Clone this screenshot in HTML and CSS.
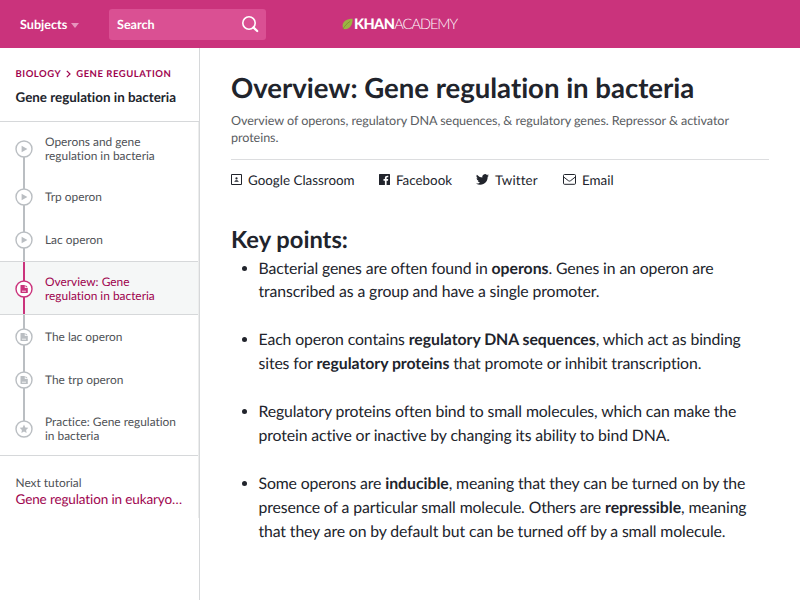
FILE: index.html
```html
<!DOCTYPE html>
<html lang="en">
<head>
<meta charset="UTF-8">
<meta name="viewport" content="width=device-width, initial-scale=1.0">
<title>Overview: Gene regulation in bacteria | Khan Academy</title>
<link rel="stylesheet" href="styles.css">
</head>

<body>

<!-- shared icon shapes -->
<svg class="sprite" aria-hidden="true">
<symbol id="video" viewBox="0 0 18 18">
<circle cx="9" cy="9" r="8" fill="#fff" stroke="currentColor" stroke-width="1.4"/>
<path d="M6.6 5.700v6.600L12.400 9z" fill="currentColor"/>
</symbol>
<symbol id="article" viewBox="0 0 18 18">
<circle cx="9" cy="9" r="8" fill="#fff" stroke="currentColor" stroke-width="1.4"/>
<path d="M5.6 5h4.2v3h3v4.400a.7.7 0 0 1-.7.7H6.200a.7.7 0 0 1-.7-.7V5.600zM10.500 5l2.200 2.300h-2.200z" fill="currentColor"/>
<path d="M7 11.200h4" stroke="#fff" stroke-width=".8"/>
</symbol>
<symbol id="exercise" viewBox="0 0 18 18">
<circle cx="9" cy="9" r="8" fill="#fff" stroke="currentColor" stroke-width="1.4"/>
<path d="M9 4.6l1.3 2.8 3 .4-2.2 2.1.5 3L9 11.5l-2.6 1.4.5-3-2.2-2.1 3-.4z" fill="currentColor"/>
</symbol>
</svg>

<header class="navbar">
<a class="subjects">Subjects <span class="caret"></span></a>
<div class="search">
<span>Search</span>
<svg width="18" height="18" viewBox="0 0 18 18" fill="none" stroke="#fff">
<circle cx="8" cy="8" r="6.2" stroke-width="1.6"/>
<path d="M12.4 12.4l3.8 3.6" stroke-width="2.2" stroke-linecap="round"/>
</svg>
</div>
<a class="logo">
<svg width="11" height="12" viewBox="0 0 11 12">
<path d="M10.6.8C5 .8.6 3.400.6 7.600c0 1.700.6 2.800 1.300 3.500C7.400 11.600 10.800 7.600 10.600.8z" fill="#9cb443"/>
<path d="M.8 11.300C2.600 8 5 5.300 8.300 3.200" stroke="#7a8b2f" stroke-width=".8" fill="none"/>
</svg>
<b>KHAN</b><span>ACADEMY</span>
</a>
</header>

<div class="page">

<aside class="sidebar">
<div class="sidebar-head">
<div class="breadcrumb">
<a>BIOLOGY</a>
<svg width="5" height="8" viewBox="0 0 5 8"><path d="M.8.800L4 4 .8 7.200" fill="none" stroke="currentColor" stroke-width="1.200"/></svg>
<a>GENE REGULATION</a>
</div>
<div class="tutorial-title">Gene regulation in bacteria</div>
</div>

<div class="tutorial">
<ul class="lessons">
<li class="tall"><svg class="node"><use href="#video"/></svg><span>Operons and gene<br>regulation in bacteria</span></li>
<li><svg class="node"><use href="#video"/></svg><span>Trp operon</span></li>
<li><svg class="node"><use href="#video"/></svg><span>Lac operon</span></li>
<li class="tall active"><svg class="node"><use href="#article"/></svg><span>Overview: Gene<br>regulation in bacteria</span></li>
<li><svg class="node"><use href="#article"/></svg><span>The lac operon</span></li>
<li><svg class="node"><use href="#article"/></svg><span>The trp operon</span></li>
<li class="tall"><svg class="node"><use href="#exercise"/></svg><span>Practice: Gene regulation<br>in bacteria</span></li>
</ul>

<div class="next">
<div class="next-label">Next tutorial</div>
<a class="next-link">Gene regulation in eukaryo…</a>
</div>
</div>
</aside>

<main class="content">
<h1>Overview: Gene regulation in bacteria</h1>
<p class="description">Overview of operons, regulatory DNA sequences, &amp; regulatory genes. Repressor &amp; activator<br>proteins.</p>

<div class="share">
<a class="classroom">
<svg width="11" height="11" viewBox="0 0 11 11"><path d="M.5.500h10v10H.5z" fill="none" stroke="currentColor"/><circle cx="5.500" cy="4.400" r="1.100" fill="currentColor"/><path d="M3.300 7.800c0-2.200 4.400-2.200 4.400 0z" fill="currentColor"/></svg>
Google Classroom</a>
<a class="facebook">
<svg width="11" height="11" viewBox="0 0 11 11"><path d="M.6 0h9.800q.6 0 .6.600v9.800q0 .6-.6.600H7.600V6.800H9l.2-1.700H7.600V4.100c0-.5.200-.8.800-.8h.9V1.800C7.100 1.500 5.900 2.200 5.900 3.800v1.300H4.500v1.700h1.400V11H.6q-.6 0-.6-.6V.6Q0 0 .6 0z" fill="currentColor"/></svg>
Facebook</a>
<a class="twitter">
<svg width="13" height="11" viewBox="0 0 24 20"><path d="M24 2.400a10 10 0 0 1-2.800.8A5 5 0 0 0 23.300.5a10 10 0 0 1-3.100 1.200 4.900 4.900 0 0 0-8.400 4.500A14 14 0 0 1 1.700 1a4.900 4.900 0 0 0 1.500 6.600A5 5 0 0 1 1 7v.1a4.900 4.900 0 0 0 4 4.800 5 5 0 0 1-2.300.1 4.900 4.900 0 0 0 4.600 3.400A10 10 0 0 1 0 17.500a14 14 0 0 0 21.500-12.400V4.900A10 10 0 0 0 24 2.400z" fill="currentColor"/></svg>
Twitter</a>
<a class="email">
<svg width="13" height="11" viewBox="0 0 13 11"><rect x=".5" y=".5" width="12" height="9.800" rx="1" fill="none" stroke="currentColor"/><path d="M.7 3l4.700 3.700q1.100.8 2.200 0L12.300 3" fill="none" stroke="currentColor"/></svg>
Email</a>
</div>

<h2>Key points:</h2>
<ul class="points">
<li>Bacterial genes are often found in <b>operons</b>. Genes in an operon are<br>transcribed as a group and have a single promoter.</li>
<li>Each operon contains <b>regulatory DNA sequences</b>, which act as binding<br>sites for <b>regulatory proteins</b> that promote or inhibit transcription.</li>
<li>Regulatory proteins often bind to small molecules, which can make the<br>protein active or inactive by changing its ability to bind DNA.</li>
<li>Some operons are <b>inducible</b>, meaning that they can be turned on by the<br>presence of a particular small molecule. Others are <b>repressible</b>, meaning<br>that they are on by default but can be turned off by a small molecule.</li>
</ul>
</main>

</div>

</body>
</html>
```

FILE: styles.css
```css
*{
box-sizing:border-box;
}

body{
margin:0;
height:600px;
overflow:hidden;
display:flex;
flex-direction:column;
font-family:Lato, "Liberation Sans", sans-serif;
font-variant-ligatures:none;
text-rendering:geometricPrecision;
color:#21242c;
background:white;
}

ul{
list-style:none;
margin:0;
padding:0;
}

.sprite{
display:none;
}

.navbar{
display:flex;
align-items:center;
flex:none;
height:48px;
padding-left:20px;
background:#ca337c;
color:white;
}

.subjects{
display:flex;
align-items:center;
gap:4px;
width:89px;
font-size:12.6px;
font-weight:bold;
}

.caret{
margin-top:3px;
border:4px solid transparent;
border-top:5px solid #e695bd;
border-bottom:0;
}

.search{
display:flex;
align-items:center;
justify-content:space-between;
width:157px;
height:31px;
padding:0 7px 0 8px;
border-radius:3px;
background:#da5093;
font-size:12.6px;
font-weight:bold;
}

.logo{
display:flex;
align-items:center;
margin-left:76px;
font-size:14.5px;
}

.logo svg{
margin-right:1px;
}

.logo b{
font-weight:900;
letter-spacing:-0.6px;
}

.logo span{
font-weight:300;
letter-spacing:-1px;
}

.page{
display:flex;
flex:1;
}

.sidebar{
width:200px;
border-right:1px solid #d6d8da;
}

.sidebar-head{
height:74px;
padding:19px 0 0 15.5px;
border-bottom:1px solid #d6d8da;
}

.breadcrumb{
display:flex;
align-items:center;
gap:5px;
height:14px;
font-size:9.5px;
font-weight:bold;
letter-spacing:0.53px;
color:#9e034e;
}

.tutorial-title{
margin-top:8px;
font-size:13.4px;
line-height:16px;
font-weight:bold;
}

.tutorial{
height:396px;
border-right:1px solid #eceded;
}

.lessons{
border-bottom:1px solid #d6d8da;
}

.lessons li{
display:flex;
align-items:center;
height:43px;
padding-left:15px;
font-size:11.9px;
line-height:14px;
color:#4f5257;
/* vertical line joining the nodes */
background:linear-gradient(#babec2,#babec2) 23px 0/2px 100% no-repeat;
}

.lessons li.tall{
height:54px;
}

.lessons li:first-child{
height:53px;
padding-top:1px;
background-position:23px 27px;
}

.lessons li:last-child{
padding-top:1px;
background-size:2px 27px;
}

.node{
width:18px;
height:18px;
margin-right:12px;
color:#babec2;
}

.lessons .active{
height:55px;
padding-top:1px;
color:#9e034e;
border-top:1px solid #d6d8da;
border-bottom:1px solid #d6d8da;
background-color:#f5f7f7;
background-image:linear-gradient(#ca337c,#ca337c);
}

.active .node{
color:#ca337c;
}

.next{
padding:18px 0 0 15.5px;
}

.next-label{
font-size:11.9px;
line-height:17px;
color:#4f5257;
}

.next-link{
display:block;
font-size:13.5px;
letter-spacing:-0.12px;
line-height:17px;
white-space:nowrap;
color:#9e034e;
}

.content{
width:569px;
padding:23px 0 0 31px;
}

h1{
margin:0;
font-size:27.6px;
letter-spacing:-0.03px;
line-height:33px;
}

.description{
margin:0;
padding:8px 0 12px;
border-bottom:1px solid #dcdddf;
font-size:12.6px;
letter-spacing:-0.07px;
line-height:17.3px;
color:#5a5d62;
}

.share{
display:flex;
height:40px;
align-items:center;
font-size:13.4px;
}

.share a{
display:flex;
align-items:center;
gap:6px;
}

.classroom{
width:148px;
}

.facebook{
width:97px;
}

.twitter{
width:87px;
letter-spacing:0.1px;
}

h2{
margin:25px 0 0;
font-size:23.7px;
line-height:30px;
}

.points{
font-size:15.8px;
letter-spacing:-0.12px;
line-height:23.8px;
padding-left:27.5px;
margin-top:2px;
list-style:disc;
}

.points b{
letter-spacing:-0.03px;
}

.points li{
margin-bottom:24.2px;
}
```
